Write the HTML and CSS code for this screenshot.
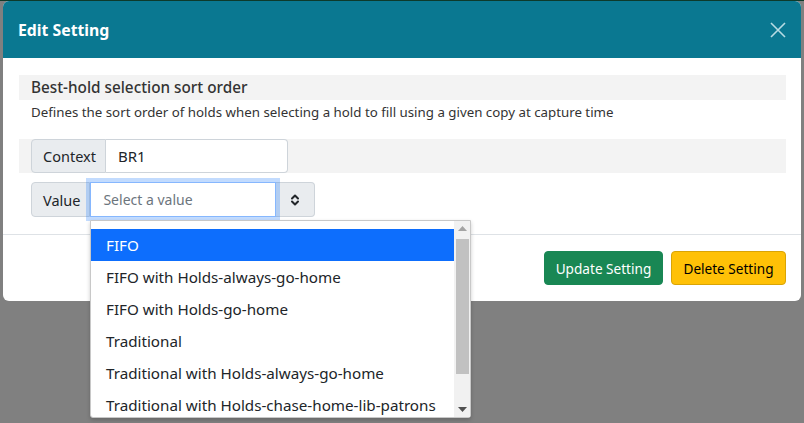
FILE: index.html
```html
<!DOCTYPE html>
<html>
<head>
<meta charset="utf-8">
<link rel="stylesheet" href="styles.css">
</head>
<body>
<div class="navbar"></div>
<div class="modal">
  <div class="modal-header">
    <h5 class="modal-title">Edit Setting</h5>
    <svg class="close" width="16" height="16" viewBox="0 0 16 16"><path d="M1 1L15 15M15 1L1 15" stroke="#b7dbe3" stroke-width="1.6" fill="none"/></svg>
  </div>
  <div class="modal-body">
    <div class="setting-name">Best-hold selection sort order</div>
    <div class="setting-desc">Defines the sort order of holds when selecting a hold to fill using a given copy at capture time</div>
    <div class="row row-shaded">
      <div class="input-group">
        <span class="addon">Context</span>
        <span class="field context-field">BR1</span>
      </div>
    </div>
    <div class="row">
      <div class="input-group">
        <span class="addon">Value</span>
        <span class="field value-field focus">Select a value</span>
        <span class="addon toggle">
          <svg width="10" height="14" viewBox="0 0 10 14"><path d="M2 5.5L5 2.5L8 5.5M2 8.5L5 11.5L8 8.5" stroke="#212529" stroke-width="2" fill="none" stroke-linecap="round" stroke-linejoin="round"/></svg>
        </span>
      </div>
      <div class="dropdown">
        <ul class="options">
          <li class="active">FIFO</li>
          <li>FIFO with Holds-always-go-home</li>
          <li>FIFO with Holds-go-home</li>
          <li>Traditional</li>
          <li>Traditional with Holds-always-go-home</li>
          <li>Traditional with Holds-chase-home-lib-patrons</li>
        </ul>
        <div class="scrollbar">
          <svg class="arrow" width="9" height="5" viewBox="0 0 9 5"><path d="M0 5L4.5 0L9 5Z" fill="#a3a3a3"/></svg>
          <div class="thumb"></div>
          <div class="spacer"></div>
          <svg class="arrow" width="9" height="5" viewBox="0 0 9 5"><path d="M0 0L4.5 5L9 0Z" fill="#505050"/></svg>
        </div>
      </div>
    </div>
  </div>
  <div class="modal-footer">
    <button class="btn btn-success">Update Setting</button>
    <button class="btn btn-warning">Delete Setting</button>
  </div>
</div>
</body>
</html>
```
FILE: styles.css
```css
* { box-sizing: border-box; }
html, body { margin: 0; padding: 0; }
body {
  background: #808080;
  font-family: "Noto Sans", "Open Sans", sans-serif;
  font-size: 15px;
  color: #212529;
  width: 804px;
  height: 423px;
  overflow: hidden;
}
.navbar {
  height: 1px;
  background: #0d3a2b;
}
.modal {
  margin-left: 3px;
  width: 798px;
  background: #fff;
  border-radius: 6px;
}
.modal-header {
  height: 57px;
  background: #0a7891;
  border-radius: 6px 6px 0 0;
  display: flex;
  align-items: center;
  justify-content: space-between;
  padding: 0 15px;
}
.modal-title {
  margin: 0;
  color: #fff;
  font-size: 15.8px;
  font-weight: 700;
}
.modal-body {
  padding: 17px 15px 18px 16px;
  position: relative;
}
.setting-name {
  background: #f3f3f3;
  height: 25px;
  line-height: 25px;
  padding-left: 12px;
  font-size: 15.3px;
  font-weight: 500;
  color: #333;
}
.setting-desc {
  padding: 4px 12px 0;
  font-size: 13.3px;
  line-height: 17px;
  color: #333;
  height: 39px;
}
.row {
  padding: 0 12px;
  height: 34px;
  position: relative;
}
.row-shaded {
  background: #f3f3f3;
  margin-bottom: 9px;
}
.input-group {
  display: flex;
  height: 34px;
}
.row:not(.row-shaded) .input-group { height: 35px; }
.addon {
  background: #e9ecef;
  border: 1px solid #ced4da;
  color: #212529;
  display: flex;
  align-items: center;
  padding: 0 9px 0 11px;
  border-radius: 4px 0 0 4px;
  font-size: 14.5px;
}
.field {
  background: #fff;
  border: 1px solid #ced4da;
  border-left: none;
  display: flex;
  align-items: center;
  padding: 0 12px;
}
.context-field {
  width: 182px;
  border-radius: 0 4px 4px 0;
  font-size: 15px;
}
.value-field {
  width: 186px;
  color: #6c757d;
  font-size: 14px;
}
.value-field.focus {
  border: 1px solid #86b7fe;
  box-shadow: 0 0 0 4px rgba(13, 110, 253, 0.25);
  position: relative;
  z-index: 1;
}
.toggle {
  border-radius: 0 4px 4px 0;
  border-left: none;
  width: 39px;
  justify-content: center;
  padding: 0;
}
.dropdown {
  position: absolute;
  left: 71px;
  top: 38px;
  width: 381px;
  height: 198px;
  background: #fff;
  border: 1px solid #c8c8c8;
  border-radius: 0 0 3px 3px;
  box-shadow: 0 2px 4px rgba(0,0,0,0.2);
  display: flex;
  z-index: 10;
  padding-top: 8px;
}
.options {
  list-style: none;
  margin: 0;
  padding: 0;
  flex: 1;
}
.options li {
  height: 32px;
  line-height: 32px;
  padding-left: 15px;
  color: #212529;
  white-space: nowrap;
  font-size: 15.2px;
}
.options li.active {
  background: #0d6efd;
  color: #fff;
}
.scrollbar {
  width: 16px;
  margin-top: -8px;
  background: #f1f1f1;
  display: flex;
  flex-direction: column;
  align-items: center;
}
.arrow { margin: 5px 0; flex: none; }
.thumb {
  width: 13px;
  height: 135px;
  background: #c1c1c1;
  margin-top: 3px;
}
.spacer { flex: 1; }
.modal-footer {
  border-top: 1px solid #dee2e6;
  display: flex;
  justify-content: flex-end;
  gap: 8px;
  padding: 16px 15px 16px 0;
}
.btn {
  font-family: inherit;
  font-size: 13.6px;
  height: 34px;
  padding: 0;
  border-radius: 4px;
  border: 1px solid transparent;
  white-space: nowrap;
}
.btn-success {
  background: #198754;
  border-color: #198754;
  color: #fff;
  width: 119px;
}
.btn-warning {
  background: #ffc107;
  border-color: #d9a406;
  color: #000;
  width: 115px;
}
```
